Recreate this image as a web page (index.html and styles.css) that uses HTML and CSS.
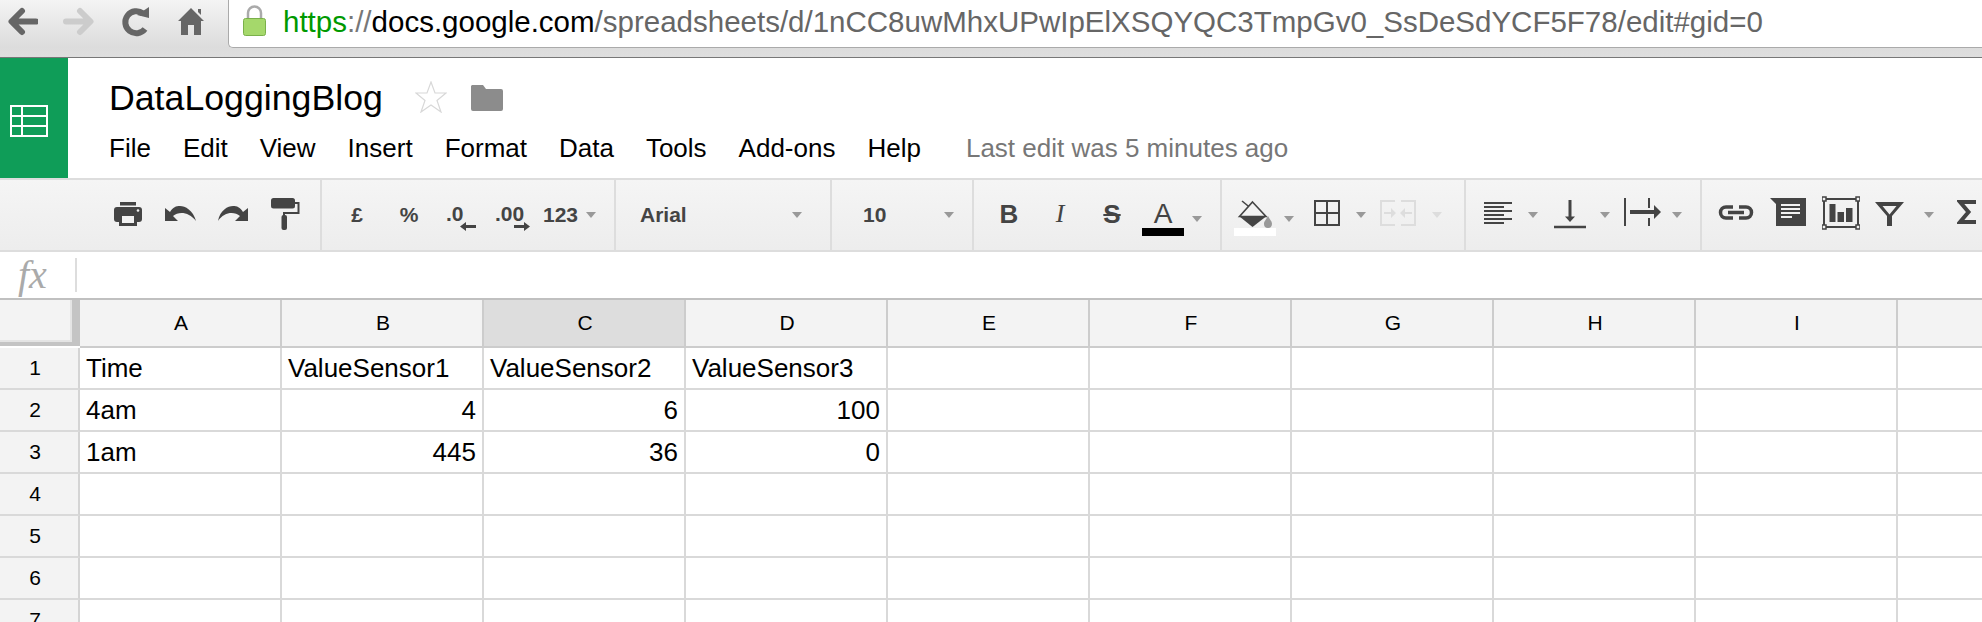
FILE: index.html
```html
<!DOCTYPE html>
<html lang="en">
<head>
<meta charset="utf-8">
<title>DataLoggingBlog</title>
<link rel="stylesheet" href="styles.css">
</head>
<body>
<header class="browser">
  <nav class="nav">
    <svg class="nav-back" width="30" height="47" viewBox="0 0 30 47"><path d="M28 21.500H6M14 11 3.500 21.500 14 32" fill="none" stroke="#666" stroke-width="6" stroke-linejoin="round" stroke-linecap="round"/></svg>
    <svg class="nav-fwd" width="31" height="47" viewBox="0 0 31 47"><path d="M3 21.500H25M17 11 27.500 21.500 17 32" fill="none" stroke="#ccc" stroke-width="6" stroke-linejoin="round" stroke-linecap="round"/></svg>
    <svg class="nav-reload" width="29" height="47" viewBox="0 0 29 47"><path d="M22 13.500A11 11 0 1 0 24 29" fill="none" stroke="#666" stroke-width="6"/><path d="M16 15 28 18 28 7Z" fill="#666"/></svg>
    <svg class="nav-home" width="26" height="47" viewBox="0 0 26 47"><path d="M13 8 26 21 23 21 23 35 16 35 16 25 10 25 10 35 3 35 3 21 0 21Z" fill="#666"/><path d="M20 9H23V15L20 12Z" fill="#666"/></svg>
  </nav>
  <div class="url">
    <svg class="lock" width="23" height="47" viewBox="0 0 23 47"><path d="M5 20V13A6.500 6.500 0 0 1 18 13V20" fill="none" stroke="#aaa" stroke-width="2.500"/><rect x="0.500" y="18.500" width="22" height="17" rx="2" fill="#a5d86b" stroke="#7ab04a"/></svg>
    <span class="url-text"><span class="url-scheme">https</span><span class="url-sep">://</span><span class="url-host">docs.google.com</span>/spreadsheets/d/1nCC8uwMhxUPwIpElXSQYQC3TmpGv0_SsDeSdYCF5F78/edit#gid=0</span>
  </div>
</header>

<section class="doc">
  <div class="doc-logo">
    <svg width="38" height="32" viewBox="0 0 38 32"><path d="M1 1H37V31H1ZM1 11H37M1 21H37M12 1V31" fill="none" stroke="#fff" stroke-width="2"/></svg>
  </div>
  <div class="doc-main">
    <div class="doc-title-row">
      <h1 class="doc-title">DataLoggingBlog</h1>
      <svg class="star" width="32" height="32" viewBox="0 0 32 32"><path d="M16 1 20 12 31 12 22 19.500 26 31 16 24 6 31 10 19.500 1 12 12 12Z" fill="#fff" stroke="#d8d8d8" stroke-width="1.200"/></svg>
      <svg class="folder" width="32" height="26" viewBox="0 0 32 26"><path d="M1 0H12L15 4H30A2 2 0 0 1 32 6V24A2 2 0 0 1 30 26H2A2 2 0 0 1 0 24V1Z" fill="#8c8c8c"/></svg>
    </div>
    <div class="menu">
      <span>File</span><span>Edit</span><span>View</span><span>Insert</span><span>Format</span><span>Data</span><span>Tools</span><span>Add-ons</span><span>Help</span>
      <span class="last-edit">Last edit was 5 minutes ago</span>
    </div>
  </div>
</section>

<section class="toolbar">
  <div class="group g1">
    <svg class="ml114" width="28" height="70" viewBox="0 0 28 70"><rect x="6" y="22" width="16" height="3.500" fill="#444"/><rect y="27" width="28" height="15" rx="3" fill="#444"/><rect x="5" y="33" width="18" height="13" fill="#444"/><rect x="8" y="36" width="12" height="7" fill="#f2f2f2"/><circle cx="24" cy="30.500" r="1.300" fill="#f2f2f2"/></svg>
    <svg class="ml23" width="31" height="70" viewBox="0 0 31 70"><path d="M0 28V41H13L8 36C14 31 24 32 31 41 28 30 20 26 15 26 11 26 8 27 5 32Z" fill="#444"/></svg>
    <svg class="ml22" width="30" height="70" viewBox="0 0 30 70"><path d="M30 28V41H17L22 36C16 31 6 32 0 41 2 30 10 26 15 26 19 26 22 27 25 32Z" fill="#444"/></svg>
    <svg class="ml23" width="29" height="70" viewBox="0 0 29 70"><rect y="18" width="24" height="10.500" rx="2.500" fill="#444"/><path d="M24 23H27.500V33H13V37" fill="none" stroke="#444" stroke-width="2"/><rect x="10.500" y="35" width="5.500" height="15" rx="2" fill="#444"/></svg>
  </div>
  <div class="group g2">
    <span class="tb-text w16 ml27">£</span>
    <span class="tb-text w22 ml33">%</span>
    <span class="dec dec-less ml26">.0<svg class="dec-arrow" width="16" height="9" viewBox="0 0 16 9"><path d="M16 3H6V0L0 4.500 6 9V6H16Z" fill="#444"/></svg></span>
    <span class="dec dec-more ml19">.00<svg class="dec-arrow" width="16" height="9" viewBox="0 0 16 9"><path d="M0 3H10V0L16 4.500 10 9V6H0Z" fill="#444"/></svg></span>
    <span class="tb-text w35 ml13">123</span>
    <i class="caret ml8"></i>
  </div>
  <div class="group g3">
    <span class="tb-text w60 tb-left ml24">Arial</span>
    <i class="caret ml92"></i>
  </div>
  <div class="group g4">
    <span class="tb-text w30 tb-left ml31">10</span>
    <i class="caret ml51"></i>
  </div>
  <div class="group g5">
    <span class="fmt fmt-b ml25">B</span>
    <span class="fmt fmt-i ml31">I</span>
    <span class="fmt fmt-s ml30">S</span>
    <span class="text-color ml18"><span class="text-color-a">A</span><span class="text-color-bar"></span></span>
    <i class="caret caret-low ml8"></i>
  </div>
  <div class="group g6">
    <svg class="ml12" width="42" height="70" viewBox="0 0 42 70"><path d="M8 21 24 34" stroke="#444" stroke-width="1.600"/><path d="M18.500 22 32 36.500H5.500Z" fill="#f2f2f2" stroke="#444" stroke-width="1.600"/><path d="M5.500 36.500H32L18.500 47Z" fill="#444"/><path d="M34 36C36 40 38 41 38 44A4 4 0 0 1 30 44C30 41 32 40 34 36Z" fill="#999"/><rect y="48" width="42" height="8" fill="#fff"/></svg>
    <i class="caret caret-low ml8"></i>
    <svg class="ml20" width="26" height="70" viewBox="0 0 26 70"><path d="M1 21H25V45H1ZM13 21V45M1 33H25" fill="none" stroke="#444" stroke-width="2"/></svg>
    <i class="caret ml16"></i>
    <svg class="ml14" width="36" height="70" viewBox="0 0 36 70"><path d="M15 21H1V45H15M21 21H35V45H21" fill="none" stroke="#ddd" stroke-width="2"/><path d="M4 33H12M32 33H24" stroke="#ddd" stroke-width="2"/><path d="M11 28 16 33 11 38ZM25 28 20 33 25 38Z" fill="#ddd"/></svg>
    <i class="caret caret-off ml16"></i>
  </div>
  <div class="group g7">
    <svg class="ml18" width="28" height="70" viewBox="0 0 28 70"><path d="M0 23H28M0 27H20M0 31H28M0 35H20M0 39H28M0 43H20" stroke="#444" stroke-width="2"/></svg>
    <i class="caret ml16"></i>
    <svg class="ml16" width="32" height="70" viewBox="0 0 32 70"><path d="M16 20V38" stroke="#444" stroke-width="3"/><path d="M11 36.500H21L16 42Z" fill="#444"/><path d="M0 47H32" stroke="#444" stroke-width="2.500"/></svg>
    <i class="caret ml14"></i>
    <svg class="ml14" width="37" height="70" viewBox="0 0 37 70"><path d="M1 18V46M25 18V28M25 38V46" stroke="#444" stroke-width="2"/><path d="M6 32H31" stroke="#444" stroke-width="4"/><path d="M30 25 37 32 30 39Z" fill="#444"/></svg>
    <i class="caret ml11"></i>
  </div>
  <div class="group g8">
    <svg class="ml16" width="36" height="70" viewBox="0 0 36 70"><path d="M15 27H8A5.500 5.500 0 0 0 8 38H15M21 27H28A5.500 5.500 0 0 1 28 38H21M10 32.500H26" fill="none" stroke="#444" stroke-width="3.500"/></svg>
    <svg class="ml16" width="36" height="70" viewBox="0 0 36 70"><path d="M0 18H36V46H6V24Z" fill="#444"/><path d="M11 25H30M11 29H30M11 33H30M11 37H22" stroke="#f2f2f2" stroke-width="2"/></svg>
    <svg class="ml16" width="38" height="70" viewBox="0 0 38 70"><rect x="2" y="19" width="34" height="28" fill="none" stroke="#444" stroke-width="2"/><path d="M0 17H4V21H0ZM34 17H38V21H34ZM0 45H4V49H0ZM34 45H38V49H34Z" fill="#f2f2f2" stroke="#444" stroke-width="1.500"/><path d="M7.500 24H13.500V42H7.500ZM15.500 32H22V42H15.500ZM24 28H30.500V42H24Z" fill="#444"/></svg>
    <svg class="ml15" width="29" height="70" viewBox="0 0 29 70"><path d="M0 22H29L17 36V46H12V36ZM7.500 26 14.500 34.500 21.500 26Z" fill="#444" fill-rule="evenodd"/></svg>
    <i class="caret ml20"></i>
    <svg class="ml23" width="19" height="70" viewBox="0 0 19 70"><path d="M19 22H3L11.500 32 3 42H19" fill="none" stroke="#444" stroke-width="4"/></svg>
  </div>
</section>

<section class="formula">
  <span class="fx">fx</span>
  <span class="formula-div"></span>
</section>

<section class="sheet">
  <div class="corner"></div>
  <div class="ch">A</div><div class="ch">B</div><div class="ch ch-active">C</div><div class="ch">D</div><div class="ch">E</div><div class="ch">F</div><div class="ch">G</div><div class="ch">H</div><div class="ch">I</div><div class="ch"></div>

  <div class="rh">1</div><div class="c">Time</div><div class="c">ValueSensor1</div><div class="c">ValueSensor2</div><div class="c">ValueSensor3</div><div class="c"></div><div class="c"></div><div class="c"></div><div class="c"></div><div class="c"></div><div class="c"></div>
  <div class="rh">2</div><div class="c">4am</div><div class="c n">4</div><div class="c n">6</div><div class="c n">100</div><div class="c"></div><div class="c"></div><div class="c"></div><div class="c"></div><div class="c"></div><div class="c"></div>
  <div class="rh">3</div><div class="c">1am</div><div class="c n">445</div><div class="c n">36</div><div class="c n">0</div><div class="c"></div><div class="c"></div><div class="c"></div><div class="c"></div><div class="c"></div><div class="c"></div>
  <div class="rh">4</div><div class="c"></div><div class="c"></div><div class="c"></div><div class="c"></div><div class="c"></div><div class="c"></div><div class="c"></div><div class="c"></div><div class="c"></div><div class="c"></div>
  <div class="rh">5</div><div class="c"></div><div class="c"></div><div class="c"></div><div class="c"></div><div class="c"></div><div class="c"></div><div class="c"></div><div class="c"></div><div class="c"></div><div class="c"></div>
  <div class="rh">6</div><div class="c"></div><div class="c"></div><div class="c"></div><div class="c"></div><div class="c"></div><div class="c"></div><div class="c"></div><div class="c"></div><div class="c"></div><div class="c"></div>
  <div class="rh">7</div><div class="c"></div><div class="c"></div><div class="c"></div><div class="c"></div><div class="c"></div><div class="c"></div><div class="c"></div><div class="c"></div><div class="c"></div><div class="c"></div>
</section>
</body>
</html>
```
FILE: styles.css
```css
* { box-sizing: border-box; }
html, body { margin: 0; height: 622px; overflow: hidden; background: #fff; }
body { font-family: "Liberation Sans", Arial, sans-serif; color: #000; width: 1982px; }
svg { display: block; flex: none; }

/* browser chrome */
.browser { height: 58px; display: flex; align-items: flex-start; background: linear-gradient(#f4f4f4 0, #dcdcdc 47px, #dedede 100%); border-bottom: 1px solid #777; }
.nav { display: flex; width: 228px; flex: none; height: 47px; }
.nav-back { margin-left: 8px; }
.nav-fwd { margin-left: 25px; }
.nav-reload { margin-left: 27px; }
.nav-home { margin-left: 28px; }
.url { flex: 1; height: 48px; background: #fff; border-left: 1px solid #aaa; border-bottom: 1px solid #aaa; border-bottom-left-radius: 5px; display: flex; align-items: flex-start; }
.lock { margin-left: 14px; }
.url-text { margin-left: 17px; font-size: 29.500px; line-height: 44px; color: #666; white-space: nowrap; }
.url-scheme { color: #090; }
.url-sep { color: #777; }
.url-host { color: #000; }

/* document header */
.doc { height: 120px; display: flex; }
.doc-logo { width: 68px; flex: none; background: #0f9d58; display: flex; align-items: center; justify-content: center; padding-right: 10px; padding-top: 6px; }
.doc-main { padding-left: 41px; flex: 1; }
.doc-title-row { display: flex; align-items: center; height: 58px; padding-top: 21px; }
.doc-title { margin: 0; font-size: 35.700px; line-height: 40px; font-weight: 400; width: 306px; }
.star { margin-top: -2px; }
.folder { margin-left: 24px; }
.menu { display: flex; gap: 32px; font-size: 26px; line-height: 30px; margin-top: 17px; white-space: nowrap; }
.last-edit { color: #777; margin-left: 13px; }

/* toolbar */
.toolbar { height: 74px; display: flex; background: linear-gradient(#f5f5f5, #ededed); border-top: 2px solid #ddd; border-bottom: 2px solid #ddd; overflow: hidden; }
.group { display: flex; align-items: center; height: 70px; flex: none; border-right: 2px solid #ddd; }
.g1 { width: 322px; }
.g2 { width: 294px; }
.g3 { width: 216px; }
.g4 { width: 142px; }
.g5 { width: 248px; }
.g6 { width: 244px; }
.g7 { width: 236px; }
.g8 { flex: 1; border-right: 0; }

.tb-text { font-size: 21px; font-weight: 700; color: #444; text-align: center; white-space: nowrap; flex: none; }
.tb-left { text-align: left; }
.w16 { width: 16px; }
.w22 { width: 22px; }
.w30 { width: 30px; }
.w35 { width: 35px; }
.w60 { width: 60px; }

.dec { position: relative; font-size: 21px; font-weight: 700; color: #444; flex: none; line-height: 24px; margin-top: -2px; }
.dec-less { width: 30px; }
.dec-more { width: 35px; }
.dec-arrow { position: absolute; right: 0; top: 20px; }

.caret { display: block; flex: none; width: 0; height: 0; border-left: 5px solid transparent; border-right: 5px solid transparent; border-top: 6px solid #999; }
.caret-low { margin-top: 7px; }
.caret-off { border-top-color: #ddd; }

.fmt { flex: none; text-align: center; color: #444; line-height: 30px; margin-top: -2px; }
.fmt-b { width: 20px; font-size: 26px; font-weight: 700; }
.fmt-i { width: 20px; font-size: 26px; font-family: "Liberation Serif", serif; font-style: italic; }
.fmt-s { width: 24px; font-size: 26px; font-weight: 700; text-decoration: line-through; text-decoration-thickness: 2px; }
.text-color { width: 42px; flex: none; display: flex; flex-direction: column; align-items: center; margin-top: 6px; }
.text-color-a { font-size: 28px; line-height: 28px; color: #444; }
.text-color-bar { width: 42px; height: 8px; background: #000; }

.ml8 { margin-left: 8px; }
.ml11 { margin-left: 11px; }
.ml12 { margin-left: 12px; }
.ml13 { margin-left: 13px; }
.ml14 { margin-left: 14px; }
.ml15 { margin-left: 15px; }
.ml16 { margin-left: 16px; }
.ml18 { margin-left: 18px; }
.ml19 { margin-left: 19px; }
.ml20 { margin-left: 20px; }
.ml22 { margin-left: 22px; }
.ml23 { margin-left: 23px; }
.ml24 { margin-left: 24px; }
.ml25 { margin-left: 25px; }
.ml26 { margin-left: 26px; }
.ml27 { margin-left: 27px; }
.ml30 { margin-left: 30px; }
.ml31 { margin-left: 31px; }
.ml33 { margin-left: 33px; }
.ml51 { margin-left: 51px; }
.ml92 { margin-left: 92px; }
.ml114 { margin-left: 114px; }

/* formula bar */
.formula { height: 46px; display: flex; align-items: center; }
.fx { width: 75px; padding-left: 18px; font-family: "Liberation Serif", serif; font-style: italic; font-size: 40px; line-height: 46px; color: #aaa; flex: none; }
.formula-div { width: 2px; height: 34px; background: #ddd; }

/* grid */
.sheet { display: grid; grid-template-columns: 80px repeat(10, 202px); grid-template-rows: 50px repeat(7, 42px); border-top: 2px solid #c0c0c0; }
.corner { background: #f3f3f3; border-right: 8px solid #c4c4c4; border-bottom: 4px solid #c4c4c4; box-shadow: inset -2px -2px 0 #e4e4e4; height: 46px; }
.ch { background: #f3f3f3; border-right: 2px solid #ccc; border-bottom: 2px solid #ccc; font-size: 21px; padding-left: 2px; display: flex; align-items: center; justify-content: center; height: 48px; }
.ch-active { background: #ddd; }
.rh { background: #f3f3f3; border-right: 2px solid #d4d4d4; border-bottom: 2px solid #d9d9d9; font-size: 21px; padding-right: 8px; display: flex; align-items: center; justify-content: center; margin-top: -2px; height: 42px; }
.c { border-right: 2px solid #d9d9d9; border-bottom: 2px solid #d9d9d9; font-size: 26px; line-height: 40px; padding: 0 6px; white-space: nowrap; margin-top: -2px; height: 42px; }
.n { text-align: right; }
```
